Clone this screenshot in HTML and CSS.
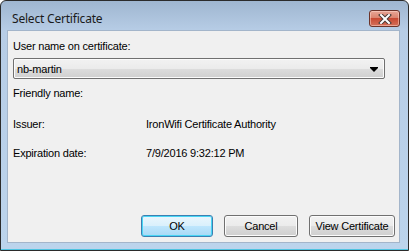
FILE: index.html
```html
<!DOCTYPE html>
<html lang="en">
  <head>
    <meta charset="UTF-8" />
    <title>Select Certificate</title>
    <link rel="stylesheet" href="styles.css">
  </head>
  <body>
    <div class="window">
      <div class="title-bar">
        <span class="title">Select Certificate</span>
        <button class="close-btn" aria-label="Close">
          <svg width="14" height="10" viewBox="0 0 14 10">
            <path d="M3 1 L11 9 M11 1 L3 9" stroke="#4a3a36" stroke-width="4" stroke-linecap="square" />
            <path d="M3 1 L11 9 M11 1 L3 9" stroke="#ffffff" stroke-width="2" stroke-linecap="square" />
          </svg>
        </button>
      </div>

      <div class="client">
        <div class="label">User name on certificate:</div>
        <div class="combo">
          <span>nb-martin</span>
          <span class="combo-arrow"></span>
        </div>
        <div class="label friendly">Friendly name:</div>

        <div class="details">
          <div class="label">Issuer:</div>
          <div class="value">IronWifi Certificate Authority</div>
          <div class="label">Expiration date:</div>
          <div class="value">7/9/2016 9:32:12 PM</div>
        </div>

        <div class="actions">
          <button class="btn btn-default">OK</button>
          <button class="btn btn-cancel">Cancel</button>
          <button class="btn btn-view">View Certificate</button>
        </div>
      </div>
    </div>
  </body>
</html>
```

FILE: styles.css
```css
* {
  margin: 0;
  padding: 0;
  box-sizing: border-box;
}

body {
  background: #ffffff;
  font-family: "Liberation Sans", Arial, sans-serif;
  font-size: 11px;
  letter-spacing: -0.2px;
  color: #000000;
}

/* Window frame */
.window {
  width: 409px;
  height: 251px;
  display: flex;
  flex-direction: column;
  border: 1px solid #2b2b2b;
  border-radius: 6px 6px 0 0;
  background: linear-gradient(180deg, #9fb6d0 0px, #b7cde6 30px, #bcd4ec 100%);
  box-shadow: inset 0 -1px 0 #4fc3e0;
  padding: 0 8px 7px 6px;
}

.title-bar {
  height: 29px;
  display: flex;
  align-items: flex-start;
  padding-left: 5px;
}

.title {
  font-family: "Noto Sans", "Liberation Sans", sans-serif;
  font-size: 12px;
  color: #1a1a1a;
  margin-top: 10px;
  line-height: 16px;
  letter-spacing: -0.2px;
}

.close-btn {
  margin-left: auto;
  margin-top: 9px;
  width: 31px;
  height: 17px;
  border: 1px solid #6c3329;
  border-radius: 3px;
  background: linear-gradient(180deg, #e7a696 0%, #db846f 45%, #c84a33 50%, #d4705a 100%);
  box-shadow: inset 0 0 0 1px rgba(255, 220, 210, 0.5);
  display: flex;
  align-items: center;
  justify-content: center;
}

/* Client area */
.client {
  flex: 1;
  background: #f0f0f0;
  border: 1px solid #a3b5ca;
  padding: 9px 14px 5px 5px;
  display: flex;
  flex-direction: column;
}

.label {
  line-height: 13px;
}

.combo {
  margin-top: 5px;
  height: 21px;
  border: 1px solid #707070;
  border-radius: 2px;
  background: linear-gradient(180deg, #f2f2f2 0%, #ebebeb 50%, #dddddd 50%, #cfcfcf 100%);
  box-shadow: inset 0 0 0 1px #fbfbfb;
  display: flex;
  align-items: center;
  padding: 0 4px 0 3px;
}

.combo-arrow {
  margin-left: auto;
  margin-right: 2px;
  width: 0;
  height: 0;
  border-left: 4px solid transparent;
  border-right: 4px solid transparent;
  border-top: 4px solid #000000;
  position: relative;
  top: 1px;
}

.combo-arrow::before {
  content: "";
  position: absolute;
  left: -4px;
  top: -5px;
  width: 8px;
  height: 1px;
  background: #000000;
}

.friendly {
  margin-top: 8px;
}

.details {
  margin-top: 18px;
  display: grid;
  grid-template-columns: 133px 1fr;
  row-gap: 16px;
}

.actions {
  margin-top: auto;
  margin-right: -10px;
  display: flex;
  justify-content: flex-end;
  gap: 11px;
}

.btn {
  height: 22px;
  font-family: "Liberation Sans", Arial, sans-serif;
  font-size: 11px;
  letter-spacing: -0.2px;
  color: #000000;
  border: 1px solid #707070;
  border-radius: 3px;
  background: linear-gradient(180deg, #f2f2f2 0%, #ebebeb 50%, #dddddd 50%, #cfcfcf 100%);
  box-shadow: inset 0 0 0 1px #fcfcfc;
}

.btn-default {
  width: 72px;
  border-color: #3c7fb1;
  background: linear-gradient(180deg, #eaf6fd 0%, #d9f0fc 50%, #bee6fd 50%, #a7d9f5 100%);
  box-shadow: inset 0 0 0 1px #48d6f5;
}

.btn-cancel {
  width: 74px;
}

.btn-view {
  width: 86px;
}
```
